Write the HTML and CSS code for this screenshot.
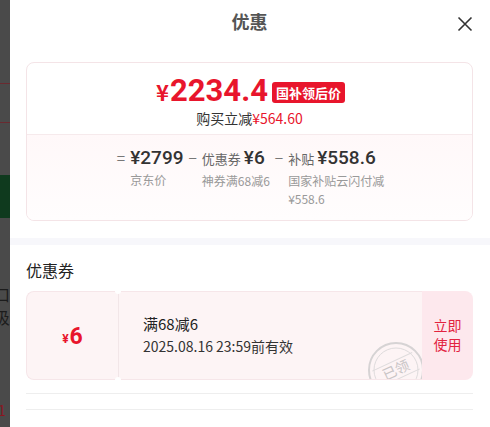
FILE: index.html
```html
<!DOCTYPE html>
<html lang="zh-CN">
<head>
  <meta charset="UTF-8">
  <meta name="viewport" content="width=device-width, initial-scale=1.0">
  <title>优惠</title>
  <link rel="stylesheet" href="styles.css">
</head>
<body>

<div class="page">
  <!-- fundo escurecido atrás do painel -->
  <div class="backdrop">
    <span class="bd-line bd-line1"></span>
    <span class="bd-line bd-line2"></span>
    <span class="bd-green"></span>
    <span class="bd-text bd-text1">口</span>
    <span class="bd-text bd-text2">汲</span>
    <span class="bd-red">1</span>
  </div>

  <div class="panel">
    <div class="header">
      <h1>优惠</h1>
      <span class="close">
        <svg width="16" height="16" viewBox="0 0 16 16"><path d="M1.5 1.5 L14.5 14.5 M14.5 1.5 L1.5 14.5" stroke="#333" stroke-width="1.6" fill="none"/></svg>
      </span>
    </div>

    <div class="price-card">
      <div class="price-top">
        <div class="price-line">
          <span class="price"><span class="yen">¥</span>2234.4</span>
          <span class="badge">国补领后价</span>
        </div>
        <div class="save">购买立减<span class="red">¥564.60</span></div>
      </div>
      <div class="breakdown">
        <div class="item">
          <span class="op">=</span>
          <div class="item-body">
            <div class="val">¥2799</div>
            <div class="desc">京东价</div>
          </div>
        </div>
        <div class="item">
          <span class="op">−</span>
          <div class="item-body">
            <div class="val"><span class="tag">优惠券</span>¥6</div>
            <div class="desc">神券满68减6</div>
          </div>
        </div>
        <div class="item">
          <span class="op">−</span>
          <div class="item-body">
            <div class="val"><span class="tag">补贴</span>¥558.6</div>
            <div class="desc">国家补贴云闪付减<br>¥558.6</div>
          </div>
        </div>
      </div>
    </div>

    <div class="band"></div>

    <div class="section">
      <h2>优惠券</h2>
      <div class="coupon">
        <div class="coupon-amount"><span class="yen-s">¥</span>6</div>
        <div class="coupon-body">
          <div class="coupon-title">满68减6</div>
          <div class="coupon-date">2025.08.16 23:59前有效</div>
          <svg class="stamp" width="60" height="60" viewBox="0 0 60 60">
            <circle cx="30" cy="30" r="27" fill="none" stroke="#d6d3d4" stroke-width="2"/>
            <circle cx="30" cy="30" r="22" fill="none" stroke="#dedbdc" stroke-width="1"/>
            <g transform="rotate(-25 30 30)">
              <line x1="8" y1="21" x2="52" y2="21" stroke="#dedbdc" stroke-width="1"/>
              <line x1="8" y1="39" x2="52" y2="39" stroke="#dedbdc" stroke-width="1"/>
              <text x="30" y="35" text-anchor="middle" font-size="14" fill="#c9c5c6" font-family="Noto Sans CJK SC, sans-serif">已领</text>
            </g>
          </svg>
        </div>
        <div class="coupon-btn">立即<br>使用</div>
      </div>
      <div class="rule"></div>
      <div class="rule rule2"></div>
    </div>
  </div>
</div>

</body>
</html>
```

FILE: styles.css
```css
* {
  box-sizing: border-box;
}
body {
  margin: 0;
  font-family: "Noto Sans CJK SC", "Noto Sans", sans-serif;
  color: #222;
  background-color: #4b4b4b;
}
.page {
  display: flex;
  width: 490px;
  height: 427px;
  overflow: hidden;
}
.backdrop {
  position: relative;
  width: 10px;
  flex-shrink: 0;
  background-color: #4a4a4a;
}
.bd-line {
  position: absolute;
  left: 0;
  width: 10px;
  height: 1px;
  background-color: #6a2a30;
}
.bd-line1 { top: 83px; }
.bd-line2 { top: 122px; }
.bd-green {
  position: absolute;
  left: 0;
  top: 175px;
  width: 10px;
  height: 43px;
  background-color: #0f3a1e;
}
.bd-text {
  position: absolute;
  left: -6px;
  font-size: 16px;
  color: #1c1c1c;
}
.bd-text1 { top: 282px; }
.bd-text2 { top: 305px; }
.bd-red {
  position: absolute;
  left: -2px;
  top: 400px;
  font-size: 14px;
  color: #8a1620;
}
.panel {
  flex: 1;
  background-color: #fff;
}
.header {
  position: relative;
  height: 42px;
  display: flex;
  align-items: center;
  justify-content: center;
}
.header h1 {
  margin: 0;
  font-size: 18px;
  font-weight: bold;
  color: #555;
  padding-right: 1px;
}
.close {
  position: absolute;
  right: 17px;
  top: 13px;
  width: 16px;
  height: 16px;
}
.price-card {
  margin: 20px 17px 0 16px;
  border: 1px solid #f4e4e7;
  border-radius: 8px;
  overflow: hidden;
}
.price-top {
  padding: 11px 0 6px;
  text-align: center;
  border-bottom: 1px solid #f6eaec;
}
.price-line {
  display: flex;
  justify-content: center;
  align-items: center;
  height: 34px;
  padding-left: 2px;
}
.price {
  color: #e8152c;
  font-family: Roboto, "Noto Sans CJK SC", sans-serif;
  font-size: 31px;
  font-weight: bold;
  line-height: 34px;
}
.yen {
  font-family: "Noto Sans CJK SC", sans-serif;
  font-size: 22px;
  margin-right: 1px;
}
.badge {
  margin-left: 4px;
  margin-top: 2px;
  background-color: #e8152c;
  color: #fff;
  font-size: 13px;
  font-weight: bold;
  border-radius: 3px;
  padding: 1px 4px;
  line-height: 19px;
}
.save {
  font-size: 14px;
  color: #333;
  line-height: 20px;
}
.red {
  color: #e8152c;
}
.breakdown {
  display: flex;
  justify-content: center;
  gap: 5px;
  padding: 11px 0 0 2px;
  background: linear-gradient(#fff8f9, #fffdfd);
  height: 85px;
}
.item {
  display: flex;
  align-items: flex-start;
}
.op {
  color: #777;
  font-size: 15px;
  line-height: 24px;
  margin-right: 5px;
}
.val {
  font-family: Roboto, "Noto Sans CJK SC", sans-serif;
  font-size: 19px;
  font-weight: 500;
  color: #333;
  line-height: 24px;
}
.tag {
  font-family: "Noto Sans CJK SC", sans-serif;
  font-size: 13px;
  font-weight: normal;
  color: #666;
  margin-right: 3px;
}
.desc {
  font-size: 12px;
  color: #999;
  line-height: 18px;
  margin-top: 1px;
}
.band {
  height: 7px;
  margin-top: 17px;
  background-color: #f7f7fb;
}
.section {
  padding: 0 17px 0 16px;
}
.section h2 {
  margin: 0;
  padding: 14px 0 10px;
  font-size: 16px;
  font-weight: normal;
  color: #222;
  line-height: 22px;
}
.coupon {
  display: flex;
  height: 89px;
}
.coupon-amount {
  position: relative;
  width: 92px;
  display: flex;
  align-items: center;
  justify-content: center;
  background-color: #fdf4f5;
  border: 1px solid #f6e6e9;
  border-right: none;
  border-radius: 8px 0 0 8px;
  color: #e8152c;
  font-family: Roboto, "Noto Sans CJK SC", sans-serif;
  font-size: 23px;
  font-weight: bold;
  padding-top: 2px;
}
.yen-s {
  font-size: 12px;
  margin-top: 5px;
  margin-right: 1px;
}
.coupon-amount::before, .coupon-amount::after {
  content: "";
  position: absolute;
  right: -3px;
  width: 6px;
  height: 6px;
  border-radius: 50%;
  background-color: #fff;
  z-index: 2;
}
.coupon-amount::before { top: -4px; }
.coupon-amount::after { bottom: -4px; }
.coupon-body {
  position: relative;
  flex: 1;
  overflow: hidden;
  background-color: #fdf4f5;
  border-top: 1px solid #f6e6e9;
  border-bottom: 1px solid #f6e6e9;
  border-left: 1px solid #f2e6e8;
  padding: 21px 0 0 24px;
}
.coupon-title {
  font-size: 15px;
  line-height: 22px;
  color: #222;
}
.coupon-date {
  font-size: 14px;
  line-height: 22px;
  color: #333;
}
.stamp {
  position: absolute;
  left: 247px;
  top: 48px;
}
.coupon-btn {
  width: 51px;
  display: flex;
  align-items: center;
  justify-content: center;
  text-align: center;
  background-color: #fde8ed;
  border-radius: 0 8px 8px 0;
  color: #e2233f;
  font-size: 14px;
  line-height: 19px;
  padding-bottom: 2px;
}
.rule {
  margin-top: 13px;
  height: 1px;
  background-color: #eeeeee;
}
.rule2 {
  margin-top: 15px;
}
```
